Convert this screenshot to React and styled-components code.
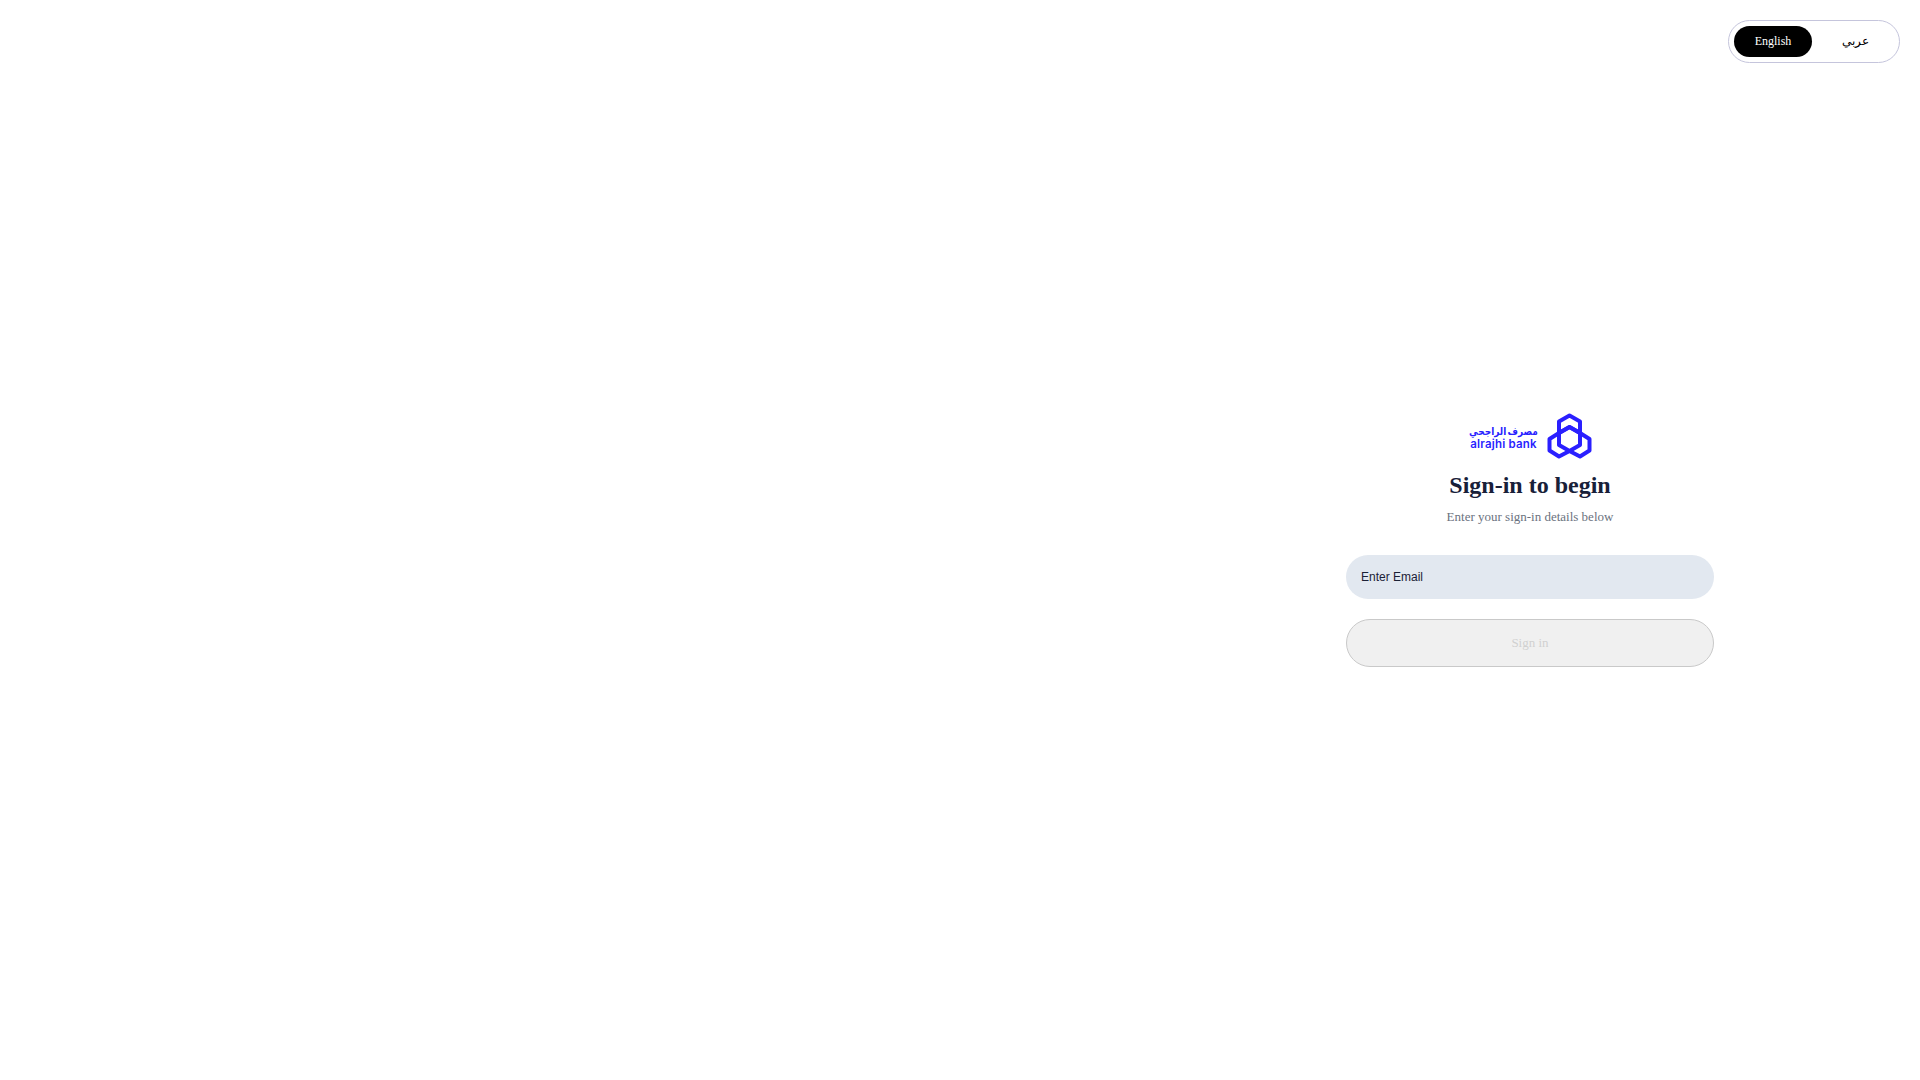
import React from 'react';
import styled, { createGlobalStyle } from 'styled-components';

const GlobalStyle = createGlobalStyle`
  html, body {
    margin: 0;
    padding: 0;
    background: #fff;
  }

  * {
    box-sizing: border-box;
  }
`;

const Page = styled.div`
  position: relative;
  width: 100%;
  min-height: 100vh;
  display: grid;
  grid-template-columns: 1fr 780px;
  align-items: center;
  justify-items: center;
  font-family: "Liberation Serif", serif;
`;

const Placeholder = styled.div`
  height: 100%;
`;

const LangSwitch = styled.div`
  position: absolute;
  top: 20px;
  right: 20px;
  width: 172px;
  height: 43px;
  padding: 5px;
  display: flex;
  align-items: center;
  border: 1px solid #c5c5dc;
  border-radius: 22px;
`;

const LangButton = styled.button`
  height: 31px;
  padding: 0;
  border: 0;
  border-radius: 16px;
  font-family: "Liberation Serif", serif;
  font-size: 12px;
  color: ${(p) => (p.$active ? '#fff' : '#000')};
  background: ${(p) => (p.$active ? '#000' : 'transparent')};
  flex: ${(p) => (p.$active ? '0 0 78px' : '1')};
  margin-left: ${(p) => (p.$active ? '0' : '4px')};
`;

const AuthContent = styled.div`
  width: 368px;
  display: flex;
  flex-direction: column;
  align-items: center;
`;

const Logo = styled.div`
  display: flex;
  align-items: center;
  gap: 8px;
  height: 46px;
  margin-bottom: 10px;
`;

const LogoWords = styled.div`
  width: 70px;
  padding-top: 4px;
  display: flex;
  flex-direction: column;
  align-items: center;
  color: #2a1fff;
  line-height: 13px;
  white-space: nowrap;
`;

const LogoArabic = styled.span`
  font-family: "DejaVu Sans", sans-serif;
  font-size: 9px;
  font-weight: 700;
  word-spacing: -2px;
  transform: scaleY(1.2);
`;

const LogoLatin = styled.span`
  font-family: Inter, sans-serif;
  font-size: 11.5px;
  font-weight: 600;
  letter-spacing: 0.2px;
`;

const Title = styled.h1`
  margin: 0 0 7px;
  font-size: 24px;
  line-height: 32px;
  font-weight: 700;
  color: #182039;
`;

const Subtitle = styled.p`
  margin: 0 0 29px;
  font-size: 13px;
  line-height: 18px;
  color: #6b7280;
`;

const EmailInput = styled.input`
  width: 100%;
  height: 44px;
  padding: 0 15px;
  border: 0;
  border-radius: 22px;
  background: #e2e8f0;
  font-family: "Liberation Sans", sans-serif;
  font-size: 12px;
  color: #111827;
  outline: none;

  &::placeholder {
    color: #1b2136;
    opacity: 1;
  }
`;

const SubmitButton = styled.button`
  width: 100%;
  height: 48px;
  margin-top: 20px;
  border: 1px solid #c9c9c9;
  border-radius: 24px;
  background: #f0f0f0;
  font-family: "Liberation Serif", serif;
  font-size: 13px;
  color: #d0d0d0;
`;

function LogoMark() {
  return (
    <svg width="45" height="46" viewBox="0 0 45 46" fill="none" stroke="#2a1fff" strokeWidth="4" strokeLinejoin="round">
      <path d="M22.5 2.5 L33 8.5 V20 L22.5 14 L12 20 V8.5 Z" />
      <path d="M22.5 14 L33 20 V32 L22.5 38 L12 32 V20 Z" />
      <path d="M12 20 L2.5 26 V37.5 L12 43.5 L22.5 38" />
      <path d="M33 20 L42.5 26 V37.5 L33 43.5 L22.5 38" />
    </svg>
  );
}

function App() {
  return (
    <>
      <GlobalStyle />
      <Page>
        <Placeholder />
        <LangSwitch>
          <LangButton $active>English</LangButton>
          <LangButton>عربي</LangButton>
        </LangSwitch>
        <AuthContent>
          <Logo>
            <LogoWords>
              <LogoArabic>مصرف الراجحي</LogoArabic>
              <LogoLatin>alrajhi bank</LogoLatin>
            </LogoWords>
            <LogoMark />
          </Logo>
          <Title>Sign-in to begin</Title>
          <Subtitle>Enter your sign-in details below</Subtitle>
          <EmailInput placeholder="Enter Email" />
          <SubmitButton disabled>Sign in</SubmitButton>
        </AuthContent>
      </Page>
    </>
  );
}

export default App;
